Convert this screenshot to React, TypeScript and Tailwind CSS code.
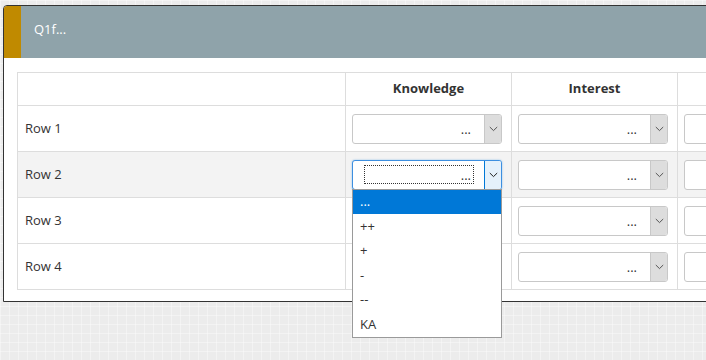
import React from "react";

const rows = ["Row 1", "Row 2", "Row 3", "Row 4"];
const options = ["...", "++", "+", "-", "--", "KA"];

function Chevron({ color = "#444" }: { color?: string }) {
  return (
    <svg width="9" height="6" viewBox="0 0 9 6" fill="none">
      <path d="M0.8 1L4.5 4.6L8.2 1" stroke={color} strokeWidth="1" />
    </svg>
  );
}

function Select({ focused = false, open = false }: { focused?: boolean; open?: boolean }) {
  return (
    <div className="relative w-[150px] h-[30px]">
      <div
        className={
          focused
            ? "flex h-full rounded-[3px] border border-[#3d8fe0] bg-white shadow-[0_0_2px_rgba(0,120,215,0.45)] overflow-hidden"
            : "flex h-full rounded-[3px] border border-[#c8c8c8] bg-white overflow-hidden"
        }
      >
        <div className={focused ? "flex-1 flex items-center justify-end pr-[10px]" : "flex-1 flex items-center justify-end pr-[13px]"}>
          {focused ? (
            <div className="w-[110px] h-[19px] border border-dotted border-[#333] flex items-center justify-end pr-[2px] text-[13px] leading-none text-[#333]">
              <span className="mt-[2px]">...</span>
            </div>
          ) : (
            <span className="text-[13px] leading-none text-[#333] mt-[2px]">...</span>
          )}
        </div>
        <div
          className={
            focused
              ? "w-[17px] flex items-center justify-center bg-[#e5f1fb] border-l border-[#0078d7]"
              : "w-[17px] flex items-center justify-center bg-[#dddddd] border-l border-[#c8c8c8]"
          }
        >
          <Chevron color={focused ? "#222" : "#555"} />
        </div>
      </div>
      {open && (
        <div className="absolute left-0 top-[29px] w-[150px] border border-[#9a9a9a] bg-white z-10">
          {options.map((o, i) => (
            <div
              key={o}
              className={
                i === 0
                  ? "h-[24.5px] flex items-center pl-[7px] text-[13px] bg-[#0078d7] text-white"
                  : "h-[24.5px] flex items-center pl-[7px] text-[13px] text-[#333]"
              }
            >
              {o}
            </div>
          ))}
        </div>
      )}
    </div>
  );
}

export default function App() {
  return (
    <div className="w-[706px] h-[360px] overflow-hidden font-['Open_Sans',sans-serif] bg-[#ececec] bg-[linear-gradient(rgba(255,255,255,0.35)_1px,transparent_1px),linear-gradient(90deg,rgba(255,255,255,0.35)_1px,transparent_1px)] bg-[size:9px_9px]">
      <div className="ml-[3px] mt-[5px] w-[880px] border border-[#333] rounded-tl-[4px] bg-white">
        <div className="flex h-[52px] rounded-tl-[3px] overflow-hidden">
          <div className="w-[17px] bg-[#c08a00]" />
          <div className="flex-1 bg-[#8fa3aa] pl-[13px] pt-[14px] text-[13px] text-white">Q1f...</div>
        </div>
        <div className="pt-[14px] pl-[13px] pb-[11px]">
          <table className="w-[826px] border-collapse text-[13px] text-[#333] table-fixed">
            <colgroup>
              <col className="w-[328px]" />
              <col className="w-[166px]" />
              <col className="w-[166px]" />
              <col className="w-[166px]" />
            </colgroup>
            <thead>
              <tr className="h-[33px]">
                <th className="border border-[#dddddd]" />
                <th className="border border-[#dddddd] font-bold text-center">Knowledge</th>
                <th className="border border-[#dddddd] font-bold text-center">Interest</th>
                <th className="border border-[#dddddd]" />
              </tr>
            </thead>
            <tbody>
              {rows.map((r, i) => (
                <tr key={r} className={i === 1 ? "h-[46px] bg-[#f3f3f3]" : "h-[46px] bg-white"}>
                  <td className="border border-[#dddddd] pl-[7px]">{r}</td>
                  <td className="border border-[#dddddd] pl-[6px] pr-[8px] py-0">
                    <Select focused={i === 1} open={i === 1} />
                  </td>
                  <td className="border border-[#dddddd] pl-[6px] pr-[8px] py-0">
                    <Select />
                  </td>
                  <td className="border border-[#dddddd] pl-[6px] pr-[8px] py-0">
                    <Select />
                  </td>
                </tr>
              ))}
            </tbody>
          </table>
        </div>
      </div>
    </div>
  );
}
